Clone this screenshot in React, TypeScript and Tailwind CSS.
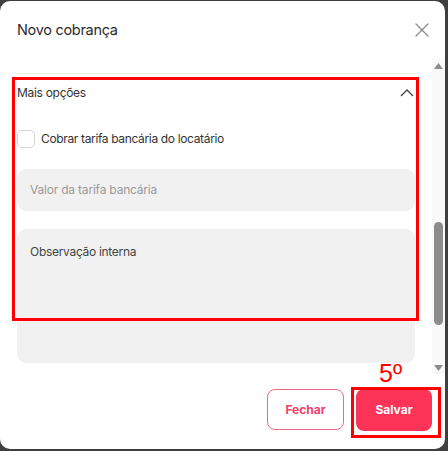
import React from "react";

export default function App() {
  return (
    <div className="w-[448px] h-[451px] bg-[#3f3f3f] pt-px" style={{ fontFamily: "Inter, 'Noto Sans', sans-serif" }}>
      <div className="relative w-[445px] h-[448px] bg-white rounded-[10px] flex flex-col overflow-hidden">
        {/* Header */}
        <div className="h-[57px] flex items-center justify-between pl-[17px] pr-[16px] shrink-0">
          <h1 className="text-[14.5px] text-[#2b2b2b] tracking-[-0.3px] pt-[1px]">Novo cobrança</h1>
          <svg width="14" height="14" viewBox="0 0 14 14" className="text-[#8a8a8a]">
            <path d="M1 1L13 13M13 1L1 13" stroke="currentColor" strokeWidth="1.3" strokeLinecap="round" />
          </svg>
        </div>

        {/* Body + scrollbar */}
        <div className="flex h-[316px] shrink-0">
          <div className="flex-1 overflow-hidden pl-[17px] pr-[17px]">
            <div className="mt-[15px] border-t border-[#ececec]" />
            <div className="h-[38px] flex items-center justify-between">
              <span className="text-[12px] tracking-[-0.3px] text-[#333]">Mais opções</span>
              <svg width="14" height="8" viewBox="0 0 14 8" className="text-[#444] mr-[1px]">
                <path d="M1 7L7 1L13 7" fill="none" stroke="currentColor" strokeWidth="1.3" />
              </svg>
            </div>
            <div className="flex items-center gap-[6px] mt-[18px]">
              <div className="w-[18px] h-[18px] rounded-[5px] border border-[#d4d4d4] bg-white" />
              <span className="text-[12px] tracking-[-0.35px] text-[#333]">Cobrar tarifa bancária do locatário</span>
            </div>
            <div className="mt-[21px] h-[42px] rounded-[9px] bg-[#f1f1f1] flex items-center px-[13px]">
              <span className="text-[12px] tracking-[-0.2px] text-[#9a9a9a]">Valor da tarifa bancária</span>
            </div>
            <div className="mt-[18px] h-[134px] rounded-[9px] bg-[#f1f1f1] px-[13px] pt-[9px]">
              <span className="text-[12px] tracking-[-0.3px] text-[#444]">Observação interna</span>
            </div>
          </div>
          {/* Scrollbar */}
          <div className="w-[13px] bg-[#f9f9f9] flex flex-col items-center pt-[5px] pb-[3px]">
            <svg width="9" height="6" viewBox="0 0 9 6"><path d="M4.5 0L9 6H0Z" fill="#8c8c8c" /></svg>
            <div className="flex-1 w-full flex flex-col items-center">
              <div className="h-[153px]" />
              <div className="w-[9px] h-[103px] rounded-full bg-[#8c8c8c]" />
            </div>
            <svg width="9" height="6" viewBox="0 0 9 6"><path d="M0 0H9L4.5 6Z" fill="#8c8c8c" /></svg>
          </div>
        </div>

        {/* Footer */}
        <div className="flex-1 flex items-center justify-end gap-[12px] pr-[13px] pb-[4px]">
          <button className="w-[77px] h-[41px] rounded-[8px] border border-[#f06a85] bg-white text-[#f0416a] text-[12px] font-bold">
            Fechar
          </button>
          <button className="w-[76px] h-[42px] rounded-[8px] bg-[#fe3358] text-white text-[12px] font-bold">
            Salvar
          </button>
        </div>

        {/* Annotations */}
        <div className="absolute left-[12px] top-[76px] w-[407px] h-[244px] border-[3px] border-[#ff0000] pointer-events-none" />
        <div className="absolute left-[351px] top-[386px] w-[90px] h-[51px] border-[3px] border-[#ff0000] pointer-events-none" />
        <div className="absolute left-[379px] top-[357px] text-[25px] leading-[30px] text-[#ff0000]" style={{ fontFamily: "'Liberation Sans', sans-serif" }}>
          5º
        </div>
      </div>
    </div>
  );
}
